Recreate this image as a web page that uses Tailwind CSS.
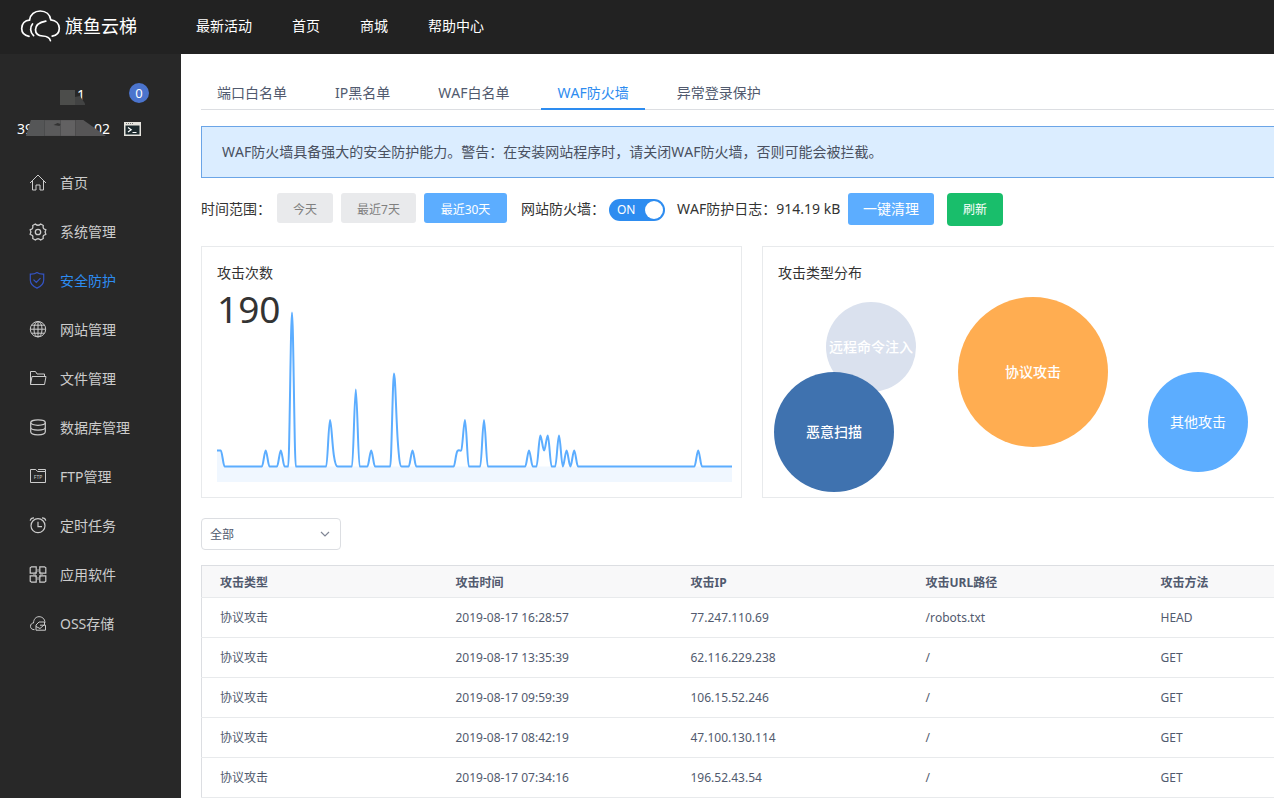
<!DOCTYPE html>
<html lang="zh-CN">
<head>
<meta charset="utf-8">
<meta name="viewport" content="width=device-width, initial-scale=1">
<title>旗鱼云梯 - WAF防火墙</title>
<script src="https://cdn.jsdelivr.net/npm/@tailwindcss/browser@4"></script>
</head>
<body class="flex h-screen flex-col overflow-hidden bg-white font-['Noto_Sans','Noto_Sans_CJK_SC',sans-serif] text-sm text-[#333] [font-kerning:none]">

<header class="flex h-[54px] shrink-0 items-center bg-[#222] pb-0.5 text-white">
  <a href="#" class="flex w-[176px] items-center gap-1 pl-5 text-lg" aria-label="旗鱼云梯">
    <svg class="h-8 w-[41px]" viewBox="0 0 41 32" fill="none" stroke="#fff" stroke-width="1.7" stroke-linecap="round">
      <path d="M9 26.300C4.500 25.500 1.700 22.400 1.700 18.500c0-4.800 3.200-8.300 7.800-8.400C10.300 4.500 14.700 1 20.200 1c5.600 0 9.800 3.500 10.600 8.800 5 .6 8.500 3.800 8.500 8.400 0 4.200-2.800 7.300-7.100 8"/>
      <path d="M12.500 14c-2.800 3.300-2.500 8.200 1.100 11.600"/>
      <path d="M25.800 11.200c-5.800 1.100-10.300 3-10.300 8.600 0 4.200 3.300 6 7.200 6.200 3.800.2 6.800 1.300 7.700 4.600"/>
    </svg>
    <span>旗鱼云梯</span>
  </a>
  <nav class="flex gap-10 pl-5">
    <a href="#">最新活动</a>
    <a href="#">首页</a>
    <a href="#">商城</a>
    <a href="#">帮助中心</a>
  </nav>
</header>

<div class="flex min-h-0 flex-1">
  <aside class="w-[181px] shrink-0 bg-[#282828] text-[#ccc]">
    <div class="flex h-[104px] flex-col pt-6 text-white">
      <div class="flex h-[30px] items-center justify-end pr-8">
        <div class="relative mr-11 flex h-6 w-7 items-end justify-end pt-1 leading-5">
          <span>1</span>
          <svg class="absolute inset-x-0 bottom-0 h-4 w-7" viewBox="0 0 28 16"><path d="M3 1h15v15H3z" fill="#4c4d4b"/><path d="M18 8l5-1 6 9H18z" fill="#424343"/></svg>
        </div>
        <span class="flex size-5 items-center justify-center rounded-full bg-[#4b74cd] text-[13px]">0</span>
      </div>
      <div class="flex h-[42px] items-center pl-[17px]">
        <div class="relative flex h-5 w-[93px] items-center justify-between leading-5">
          <span>39</span><span>02</span>
          <svg class="absolute inset-0 h-5 w-[93px]" viewBox="0 0 94 20"><path d="M9 17l5-16h14v16z" fill="#555657"/><path d="M28 1h16v16H28z" fill="#5a5a5b"/><path d="M44 1h15v16H44z" fill="#626162"/><path d="M59 1h8l23 16H59z" fill="#565556"/><path d="M37 6l4-2 3 1-1 2z" fill="#333"/></svg>
        </div>
        <button type="button" class="ml-[14px]" aria-label="终端">
          <svg class="h-[14px] w-[17px]" viewBox="0 0 17 14"><path d="M0 0h17v14H0z" fill="#e6e4de"/><path d="M1.500 3.500h14v9h-14z" fill="#1d2a2e"/><path d="M2 1.500h7" stroke="#777" stroke-dasharray="1 1"/><path d="M4 5.500l3.200 2.200L4 10M8.500 10.500h4" fill="none" stroke="#fff" stroke-width="1.200"/></svg>
        </button>
      </div>
    </div>
    <nav class="flex flex-col [&_a]:flex [&_a]:h-[49px] [&_a]:items-center [&_a]:gap-[13px] [&_a]:pl-[29px] [&_svg]:size-[18px] [&_svg]:fill-none [&_svg]:stroke-current">
      <a href="#"><svg viewBox="0 0 18 18"><path d="M1 9L9 1l8 8M3.500 7v9H7v-5h4v5h3.500V7"/></svg>首页</a>
      <a href="#"><svg viewBox="0 0 18 18"><path stroke-width="1.300" stroke-linejoin="round" d="M6.300 1Q9 3.600 11.700 1L14.300 2.500Q13.300 6 16.900 6.700Q15.300 9 16.900 11.300Q13.300 12 14.300 15.500L11.700 17Q9 14.400 6.300 17L3.700 15.500Q4.700 12 1.100 11.300Q2.700 9 1.100 6.700Q4.700 6 3.700 2.500z"/><circle cx="9" cy="9" r="2.700" stroke-width="1.300"/></svg>系统管理</a>
      <a href="#" class="text-[#2d8cf0]" aria-current="page"><svg class="text-[#3454c4]" viewBox="0 0 18 18"><path stroke-width="1.200" d="M8 .5C5.800 2.100 3.500 2.200 1.300 2.100v6c0 4 3 6.500 6.700 8 3.700-1.500 6.700-4 6.700-8v-6C12.500 2.200 10.200 2.100 8 .5zM4.500 7.700l2.800 2.800 4.200-4.300"/></svg>安全防护</a>
      <a href="#"><svg viewBox="0 0 18 18"><path d="M9 .5v15.400M1.300 8.200h15.400M2.700 4.200h12.600M2.700 12.200h12.600"/><circle cx="9" cy="8.200" r="7.700"/><ellipse cx="9" cy="8.200" rx="4" ry="7.700"/></svg>网站管理</a>
      <a href="#"><svg viewBox="0 0 18 18"><path d="M1.500 14.500v-13h5l1.500 2.500h7.500v2.500M1.500 14.500L3 6.500h14l-1.500 8z"/></svg>文件管理</a>
      <a href="#"><svg viewBox="0 0 18 18"><g stroke-width="1.200"><ellipse cx="9" cy="3.600" rx="7.300" ry="2.700"/><path d="M1.700 3.600v9.200c0 4 14.600 4 14.600 0V3.600M1.700 8.200c0 3.800 14.600 3.800 14.600 0"/></g></svg>数据库管理</a>
      <a href="#"><svg viewBox="0 0 18 18"><path d="M1.500 14.500v-13h5.300l1.700 2h8v11zM9 1.500h7.500v2"/><text x="9" y="11" text-anchor="middle" font-size="5" fill="currentColor" stroke="none">FTP</text></svg>FTP管理</a>
      <a href="#"><svg viewBox="0 0 18 18"><circle cx="9" cy="8.700" r="7" stroke-width="1.200"/><path stroke-width="1.200" d="M9 4.700v5h4M1.200 3.700C1.500 1.700 3 .8 5 .8M16.800 3.700C16.500 1.700 15 .8 13 .8"/></svg>定时任务</a>
      <a href="#"><svg viewBox="0 0 18 18"><path stroke-width="1.200" d="M2.500.8h4.700v6.400H1.200v-5.400zM10.800.8h4.700l1.300 1v5.400h-6zM1.200 9.800h6v6.400H2.500l-1.300-1zM10.800 9.800h6v5.400l-1.300 1h-4.700z"/><path stroke-width="1.600" opacity=".5" d="M9 3v3M9 11v3M4 8.500h3M11 8.500h3M6 6l1.200 1.200M12 6l-1.200 1.200M6 11l1.200-1.200M12 11l-1.200-1.200"/></svg>应用软件</a>
      <a href="#"><svg viewBox="0 0 18 18"><path d="M5.500 14.700c-2.300 0-4-1.300-4-3.400 0-2 1.300-3.200 3-3.300C4.700 4.200 6.800 1.700 10 1.700c3.200 0 5.800 2 6 6M7 15.200h9.500v-5H11M7 15.200V10l3-3h5.500v3M7 11.500l4 2 4-3.500"/></svg>OSS存储</a>
    </nav>
  </aside>

  <main class="min-w-0 flex-1 overflow-hidden pl-5 pt-[23px]">
    <!-- The content column is wider than the visible area and is clipped on the right. -->
    <div class="-mr-[29px]">
      <nav class="flex h-[33px] gap-4 border-b border-[#dcdee2] text-[#515a6e] [&_a]:h-[33px] [&_a]:px-4 [&_a]:leading-8">
        <a href="#">端口白名单</a>
        <a href="#">IP黑名单</a>
        <a href="#">WAF白名单</a>
        <a href="#" class="border-b-2 border-[#2d8cf0] text-[#2d8cf0]" aria-current="page">WAF防火墙</a>
        <a href="#">异常登录保护</a>
      </nav>

      <p class="mt-4 flex h-[52px] items-center border border-[#6ba5e7] bg-[#dbedff] px-5 text-[#495060]">WAF防火墙具备强大的安全防护能力。警告：在安装网站程序时，请关闭WAF防火墙，否则可能会被拦截。</p>

      <div class="mt-[15px] flex h-[33px] items-start leading-8">
        <span class="w-[76px]">时间范围：</span>
        <div class="flex gap-2 text-xs">
          <button type="button" class="h-[30px] w-14 rounded-[3px] bg-[#e9eaec] pt-[3px] text-[#808080]">今天</button>
          <button type="button" class="h-[30px] w-[75px] rounded-[3px] bg-[#e9eaec] pt-[3px] text-[#808080]">最近7天</button>
          <button type="button" class="h-[30px] w-[83px] rounded-[3px] bg-[#5cadff] pt-[3px] text-white">最近30天</button>
        </div>
        <label for="waf" class="w-[102px] pl-[14px]">网站防火墙：</label>
        <span class="relative mt-1.5 flex h-[22px] w-14">
          <input id="waf" type="checkbox" role="switch" checked class="h-[22px] w-14 appearance-none rounded-full bg-[#2d8cf0]">
          <span class="pointer-events-none absolute inset-0 flex items-center justify-between pl-2 pr-[2px] text-xs text-white">ON<span class="size-[18px] rounded-full bg-white"></span></span>
        </span>
        <span class="w-[183px] whitespace-nowrap pl-3">WAF防护日志：914.19 kB</span>
        <button type="button" class="h-8 w-[86px] rounded-[3px] bg-[#5cadff] text-white">一键清理</button>
        <button type="button" class="ml-[13px] h-[33px] w-14 rounded-[4px] bg-[#19be6b] pt-px text-xs text-white">刷新</button>
      </div>

      <div class="mt-5 grid grid-cols-2 gap-5">
        <section class="relative h-[252px] border border-[#e8eaec] px-[15px] pt-4">
          <h2 class="leading-5">攻击次数</h2>
          <p class="pt-1.5 text-[37px] leading-10">190</p>
          <svg class="absolute bottom-[15px] left-[15px] h-[182px] w-[calc(100%-24px)]" viewBox="217 300 515 182" preserveAspectRatio="none" fill="none">
            <defs>
              <path id="curve" d="M217 450.500h3.800c1.300 0 2.500 16 3.800 16H261.900c1.300 0 2.500-16 3.800-16s2.500 16 3.800 16H277c1.300 0 2.500-16 3.800-16s2.500 16 3.800 16h3.600c1.300 0 2.500-154 3.800-154s2.500 154 3.800 154H326.200c1.300 0 2.500-46.500 3.800-46.500s2 22 3.800 35c1 7 2 11.500 3.800 11.500H352c1.300 0 2.500-77 3.800-77s2.500 77 3.800 77H367.400c1.300 0 2.500-16 3.800-16s2.500 16 3.800 16H390.200c1.300 0 2.500-93 3.800-93s2.200 46 3.800 68c1 14 2 25 3.800 25H408.700c1.300 0 2.500-16 3.800-16s2.500 16 3.800 16H453.700c1.300 0 2-13.500 3.800-15.500s2 .5 3.700-.5c1.300-1 2.500-30.500 3.800-30.500s2.500 46.500 3.800 46.500H480.200c1.300 0 2.500-46.500 3.800-46.500s2.500 46.500 3.800 46.500H525.200c1.300 0 2.500-16 3.800-16s2.500 16 3.800 16h3.700c1.300 0 2.500-31 3.800-31s2.500 15 3.800 15 2.400-15 3.700-15 2.500 31 3.800 31h3.600c1.300 0 2.500-31 3.800-31s2.500 31 3.800 31 2.500-16 3.800-16 2.500 16 3.800 16 2.500-16 3.800-16 2.500 16 3.800 16H694.400c1.300 0 2.500-16 3.800-16s2.500 16 3.800 16H732"/>
              <clipPath id="above"><path d="M225 300h507v166.500H225z"/></clipPath>
            </defs>
            <path d="M217 450.500h3.800q1.300 0 3.800 16H732V482H217z" fill="#f0f7ff"/>
            <use href="#curve" stroke="#5cadff" stroke-width="2" stroke-linejoin="round"/>
          </svg>
        </section>

        <section class="relative h-[252px] border border-[#e8eaec] px-[15px] pt-4">
          <h2 class="leading-5">攻击类型分布</h2>
          <div class="absolute left-[63px] top-[55px] flex size-[90px] items-center justify-center whitespace-nowrap rounded-full bg-[#dae1ee] font-medium text-white">远程命令注入</div>
          <div class="absolute left-[11px] top-[125px] flex size-[120px] items-center justify-center rounded-full bg-[#3f72af] font-medium text-white">恶意扫描</div>
          <div class="absolute left-[195px] top-[50px] flex size-[150px] items-center justify-center rounded-full bg-[#ffad51] font-medium text-white">协议攻击</div>
          <div class="absolute left-[385px] top-[125px] flex size-[100px] items-center justify-center rounded-full bg-[#5cadff] text-white">其他攻击</div>
        </section>
      </div>

      <div class="relative mt-5 w-[140px]">
        <select aria-label="攻击类型" class="h-8 w-full appearance-none rounded-[4px] border border-[#dcdee2] bg-white px-2 pt-0.5 text-xs text-[#515a6e]"><option>全部</option></select>
        <svg class="pointer-events-none absolute right-[11px] top-3 h-2 w-[10px]" viewBox="0 0 10 8" fill="none" stroke="#808695" stroke-width="1.200"><path d="M1 2l4 4 4-4"/></svg>
      </div>

      <table class="mt-[15px] w-full table-fixed border border-[#dcdee2] text-left text-xs text-[#515a6e] [&_td]:h-10 [&_td]:border-b [&_td]:border-[#e8eaec] [&_td]:pl-[18px] [&_th]:h-8 [&_th]:border-b [&_th]:border-[#e8eaec] [&_th]:bg-[#f8f8f9] [&_th]:pl-[18px] [&_th]:pt-0.5">
        <colgroup><col class="w-[236px]"><col class="w-[235px]"><col class="w-[235px]"><col class="w-[235px]"><col></colgroup>
        <thead><tr><th>攻击类型</th><th>攻击时间</th><th>攻击IP</th><th>攻击URL路径</th><th>攻击方法</th></tr></thead>
        <tbody>
          <tr><td>协议攻击</td><td>2019-08-17 16:28:57</td><td>77.247.110.69</td><td>/robots.txt</td><td>HEAD</td></tr>
          <tr><td>协议攻击</td><td>2019-08-17 13:35:39</td><td>62.116.229.238</td><td>/</td><td>GET</td></tr>
          <tr><td>协议攻击</td><td>2019-08-17 09:59:39</td><td>106.15.52.246</td><td>/</td><td>GET</td></tr>
          <tr><td>协议攻击</td><td>2019-08-17 08:42:19</td><td>47.100.130.114</td><td>/</td><td>GET</td></tr>
          <tr><td>协议攻击</td><td>2019-08-17 07:34:16</td><td>196.52.43.54</td><td>/</td><td>GET</td></tr>
        </tbody>
      </table>
    </div>
  </main>
</div>
</body>
</html>
